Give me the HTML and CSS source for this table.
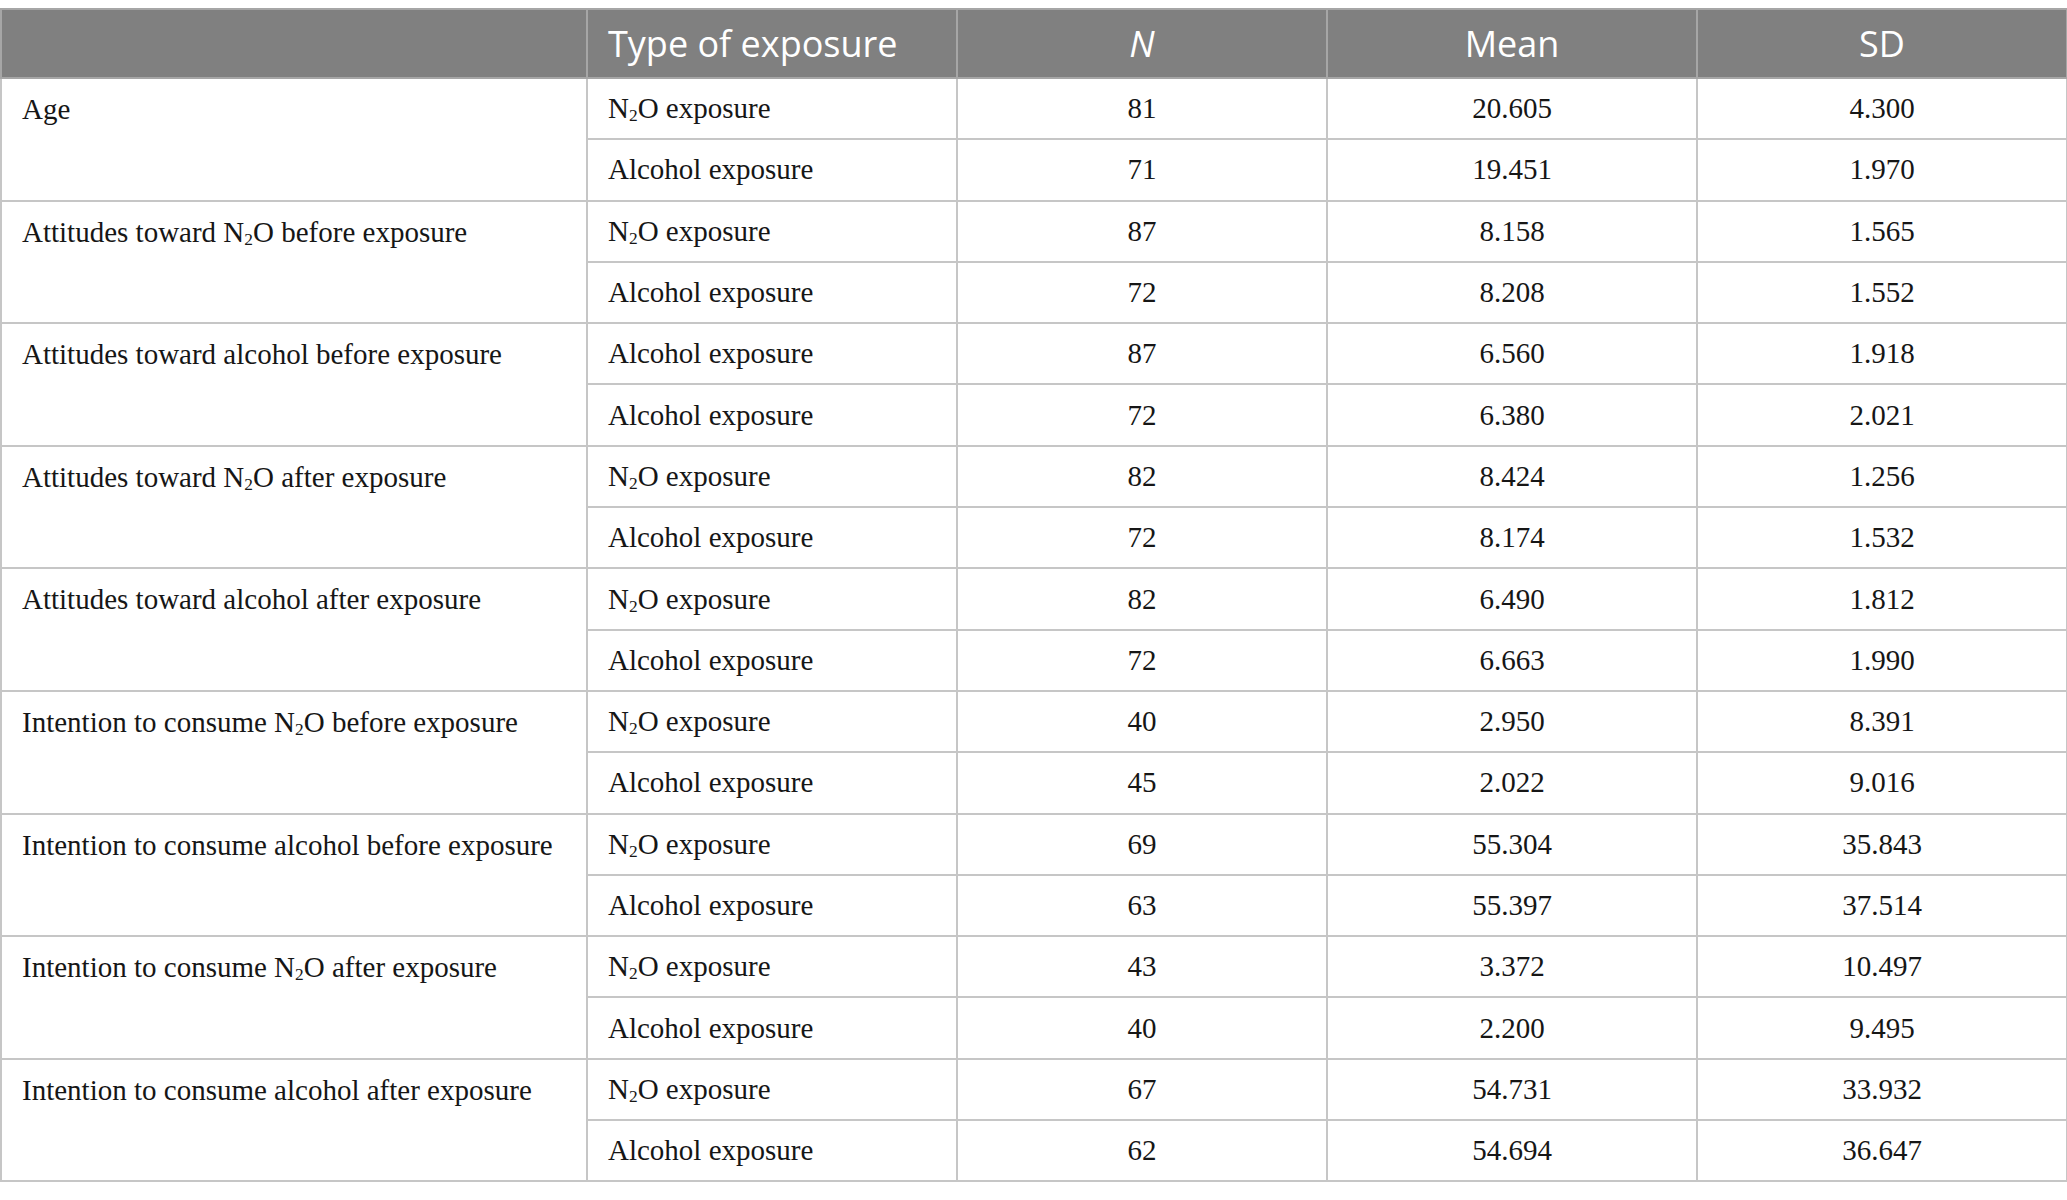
FILE: index.html
```html
<!DOCTYPE html>
<html lang="en">
<head>
    <meta charset="UTF-8">
    <meta name="viewport" content="width=device-width, initial-scale=1.0">
    <title>Descriptive statistics</title>
    <link rel="stylesheet" href="styles.css">
</head>
<body>
    <table class="stats">
        <colgroup>
            <col class="c-var">
            <col class="c-num">
            <col class="c-num">
            <col class="c-num">
            <col class="c-num">
        </colgroup>
        <thead>
            <tr>
                <th></th>
                <th class="left">Type of exposure</th>
                <th><i>N</i></th>
                <th>Mean</th>
                <th>SD</th>
            </tr>
        </thead>
        <tbody>
            <tr>
                <td class="var" rowspan="2">Age</td>
                <td class="left">N<sub>2</sub>O exposure</td><td>81</td><td>20.605</td><td>4.300</td>
            </tr>
            <tr>
                <td class="left">Alcohol exposure</td><td>71</td><td>19.451</td><td>1.970</td>
            </tr>
            <tr>
                <td class="var" rowspan="2">Attitudes toward N<sub>2</sub>O before exposure</td>
                <td class="left">N<sub>2</sub>O exposure</td><td>87</td><td>8.158</td><td>1.565</td>
            </tr>
            <tr>
                <td class="left">Alcohol exposure</td><td>72</td><td>8.208</td><td>1.552</td>
            </tr>
            <tr>
                <td class="var" rowspan="2">Attitudes toward alcohol before exposure</td>
                <td class="left">Alcohol exposure</td><td>87</td><td>6.560</td><td>1.918</td>
            </tr>
            <tr>
                <td class="left">Alcohol exposure</td><td>72</td><td>6.380</td><td>2.021</td>
            </tr>
            <tr>
                <td class="var" rowspan="2">Attitudes toward N<sub>2</sub>O after exposure</td>
                <td class="left">N<sub>2</sub>O exposure</td><td>82</td><td>8.424</td><td>1.256</td>
            </tr>
            <tr>
                <td class="left">Alcohol exposure</td><td>72</td><td>8.174</td><td>1.532</td>
            </tr>
            <tr>
                <td class="var" rowspan="2">Attitudes toward alcohol after exposure</td>
                <td class="left">N<sub>2</sub>O exposure</td><td>82</td><td>6.490</td><td>1.812</td>
            </tr>
            <tr>
                <td class="left">Alcohol exposure</td><td>72</td><td>6.663</td><td>1.990</td>
            </tr>
            <tr>
                <td class="var" rowspan="2">Intention to consume N<sub>2</sub>O before exposure</td>
                <td class="left">N<sub>2</sub>O exposure</td><td>40</td><td>2.950</td><td>8.391</td>
            </tr>
            <tr>
                <td class="left">Alcohol exposure</td><td>45</td><td>2.022</td><td>9.016</td>
            </tr>
            <tr>
                <td class="var" rowspan="2">Intention to consume alcohol before exposure</td>
                <td class="left">N<sub>2</sub>O exposure</td><td>69</td><td>55.304</td><td>35.843</td>
            </tr>
            <tr>
                <td class="left">Alcohol exposure</td><td>63</td><td>55.397</td><td>37.514</td>
            </tr>
            <tr>
                <td class="var" rowspan="2">Intention to consume N<sub>2</sub>O after exposure</td>
                <td class="left">N<sub>2</sub>O exposure</td><td>43</td><td>3.372</td><td>10.497</td>
            </tr>
            <tr>
                <td class="left">Alcohol exposure</td><td>40</td><td>2.200</td><td>9.495</td>
            </tr>
            <tr>
                <td class="var" rowspan="2">Intention to consume alcohol after exposure</td>
                <td class="left">N<sub>2</sub>O exposure</td><td>67</td><td>54.731</td><td>33.932</td>
            </tr>
            <tr>
                <td class="left">Alcohol exposure</td><td>62</td><td>54.694</td><td>36.647</td>
            </tr>
        </tbody>
    </table>
</body>
</html>
```

FILE: styles.css
```css
* {
    margin: 0;
    padding: 0;
    box-sizing: border-box;
}
body {
    background: #fff;
    padding-top: 8px;
}
.stats {
    width: 2066px;
    border-collapse: collapse;
    table-layout: fixed;
    font-family: "Liberation Serif", "Times New Roman", serif;
    font-size: 29px;
    color: #161616;
}
.c-var { width: 586px; }
.c-num { width: 370px; }
.stats th,
.stats td {
    border: 2px solid #c6c6c6;
    text-align: center;
    vertical-align: middle;
    padding: 0 20px;
}
.stats th {
    height: 69px;
    background: #808080;
    color: #fff;
    font-family: "Open Sans", "Noto Sans", sans-serif;
    font-weight: 400;
    font-size: 36px;
    border-color: #a6a6a6;
}
.stats td {
    height: 61.3px;
}
.stats .left {
    text-align: left;
}
.stats td.var {
    text-align: left;
    vertical-align: top;
    padding-top: 14px;
}
sub {
    font-size: 0.6em;
    vertical-align: -0.15em;
    line-height: 0;
}
```
